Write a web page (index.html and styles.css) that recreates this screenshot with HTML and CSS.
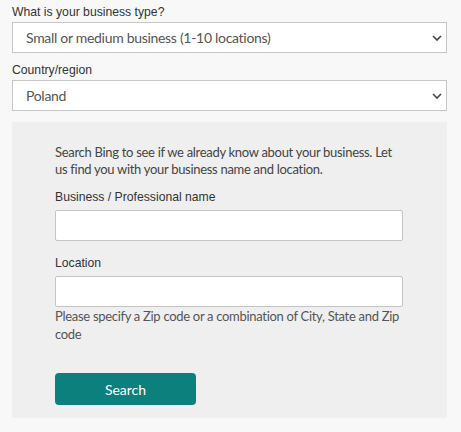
FILE: index.html
```html
<!DOCTYPE html>
<html lang="en">
<head>
<meta charset="utf-8">
<title>Business search</title>
<link rel="stylesheet" href="styles.css">
</head>
<body>
<div class="page">
  <div class="field">
    <label class="label" for="btype">What is your business type?</label>
    <div class="select-wrap">
      <select id="btype" class="select">
        <option>Small or medium business (1-10 locations)</option>
      </select>
      <svg class="chev" width="10" height="6" viewBox="0 0 10 6"><path d="M1 1 L5 5 L9 1" fill="none" stroke="#444" stroke-width="1.6"/></svg>
    </div>
  </div>
  <div class="field field-2">
    <label class="label" for="country">Country/region</label>
    <div class="select-wrap">
      <select id="country" class="select">
        <option>Poland</option>
      </select>
      <svg class="chev" width="10" height="6" viewBox="0 0 10 6"><path d="M1 1 L5 5 L9 1" fill="none" stroke="#444" stroke-width="1.6"/></svg>
    </div>
  </div>
  <div class="panel">
    <div class="panel-inner">
      <p class="desc">Search Bing to see if we already know about your business. Let us find you with your business name and location.</p>
      <label class="label label-name" for="bname">Business / Professional name</label>
      <input id="bname" class="input" type="text">
      <label class="label label-loc" for="loc">Location</label>
      <input id="loc" class="input" type="text">
      <p class="help">Please specify a Zip code or a combination of City, State and Zip code</p>
      <button class="btn" type="button">Search</button>
    </div>
  </div>
</div>
</body>
</html>
```

FILE: styles.css
```css
html, body {
  margin: 0;
  padding: 0;
  background: #f8f8f8;
}
.page {
  padding: 4px 14px 0 12px;
}
.label {
  display: block;
  font-family: "Liberation Sans", Arial, sans-serif;
  font-size: 12.2px;
  line-height: 16px;
  color: #333;
  margin-bottom: 2px;
}
.field-2 {
  margin-top: 9px;
}
.select-wrap {
  position: relative;
}
.select {
  -webkit-appearance: none;
  appearance: none;
  display: block;
  width: 100%;
  height: 31px;
  box-sizing: border-box;
  margin: 0;
  border: 1px solid #c6c6c6;
  border-radius: 0;
  background: #fff;
  padding: 0 30px 0 13px;
  font-family: Lato, "Open Sans", sans-serif;
  font-size: 14px;
  letter-spacing: -0.3px;
  color: #555;
}
.chev {
  position: absolute;
  right: 5px;
  top: 13px;
  pointer-events: none;
}
.panel {
  margin-top: 11px;
  background: #efefef;
  padding: 22px 0 13px 43px;
}
.panel-inner {
  width: 348px;
}
.desc {
  margin: 0;
  font-family: Lato, "Open Sans", sans-serif;
  font-size: 13px;
  letter-spacing: -0.3px;
  line-height: 17px;
  color: #444;
}
.label-name {
  margin-top: 11px;
  margin-bottom: 5px;
}
.label-loc {
  margin-top: 14px;
  margin-bottom: 5px;
}
.input {
  display: block;
  width: 100%;
  height: 31px;
  box-sizing: border-box;
  margin: 0;
  border: 1px solid #c4c4c4;
  border-radius: 2px;
  background: #fff;
  padding: 0 6px;
}
.help {
  margin: 0;
  font-family: Lato, "Open Sans", sans-serif;
  font-size: 13px;
  letter-spacing: -0.3px;
  line-height: 18px;
  color: #555;
}
.btn {
  display: block;
  margin-top: 30px;
  width: 141px;
  height: 32px;
  border: none;
  border-radius: 4px;
  background: #0b807d;
  color: #fff;
  font-family: Lato, "Open Sans", sans-serif;
  font-size: 14px;
  cursor: pointer;
}
```
